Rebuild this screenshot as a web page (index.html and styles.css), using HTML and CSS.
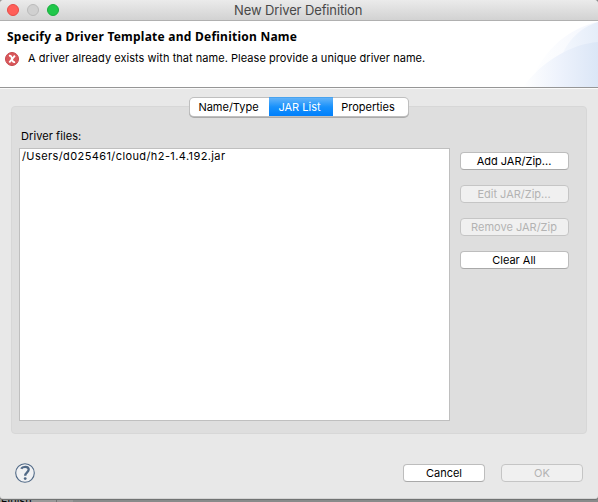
FILE: index.html
```html
<!DOCTYPE html>
<html lang="en">
<head>
<meta charset="utf-8">
<title>New Driver Definition</title>
<link rel="stylesheet" href="styles.css">
</head>
<body>
<div class="backdrop"><span class="behind">Finish</span></div>
<main class="window">
  <header class="titlebar">
    <div class="lights"><i class="light close"></i><i class="light minimize"></i><i class="light maximize"></i></div>
    <h1 class="title"><span>New Driver Definition</span></h1>
  </header>
  <section class="banner">
    <svg class="swoosh" width="120" height="66" viewBox="0 0 120 66">
      <defs>
        <linearGradient id="a"><stop offset="0" stop-color="#fff"/><stop offset="1" stop-color="#f3f6fd"/></linearGradient>
        <linearGradient id="b"><stop offset="0" stop-color="#f5f8fe"/><stop offset="1" stop-color="#e5edf9"/></linearGradient>
        <linearGradient id="c"><stop offset="0" stop-color="#fff"/><stop offset=".5" stop-color="#edf2fc"/><stop offset="1" stop-color="#dbe6f6"/></linearGradient>
      </defs>
      <path d="M52 66C60 34 89 7 120 1V66Z" fill="url(#a)"/>
      <path d="M80 45C87 21 101 7 120 1V45Z" fill="url(#b)"/>
      <path d="M45 66C65 39 94 23 120 21V66Z" fill="url(#c)"/>
    </svg>
    <h2 class="heading"><span>Specify a Driver Template and Definition Name</span></h2>
    <div class="message">
      <svg class="error" width="14" height="14" viewBox="0 0 14 14">
        <circle cx="7" cy="7" r="6.5" fill="#d9575b" stroke="#c5484c"/>
        <path d="M4 3.800C6 3.300 6.400 4.500 7 7S8.200 10.600 10 9.900M9.900 3.600L4.300 10.500" fill="none" stroke="#fff" stroke-width="1.9"/>
      </svg>
      <p><span>A driver already exists with that name. Please provide a unique driver name.</span></p>
    </div>
  </section>
  <section class="content">
    <nav class="tabs">
      <div class="tab name"><span>Name/Type</span></div><div class="tab selected"><span>JAR List</span></div><div class="tab props"><span>Properties</span></div>
    </nav>
    <div class="group">
      <div class="label"><span>Driver files:</span></div>
      <div class="columns">
        <div class="list"><span>/Users/d025461/cloud/h2-1.4.192.jar</span></div>
        <div class="actions">
          <button><span>Add JAR/Zip...</span></button>
          <button disabled><span>Edit JAR/Zip...</span></button>
          <button disabled><span>Remove JAR/Zip</span></button>
          <button><span>Clear All</span></button>
        </div>
      </div>
    </div>
  </section>
  <footer class="footer">
    <svg class="help" width="20" height="20" viewBox="0 0 20 20">
      <circle cx="10" cy="10" r="9.300" fill="#f0f1f3" stroke="#506986" stroke-width="1.100"/>
      <path d="M6.200 5.800C7.500 3.300 13.700 2.900 13.700 6.600C13.700 9.300 10.200 9.400 10.200 12.800" fill="none" stroke="#506986" stroke-width="2.300"/>
      <circle cx="10.200" cy="15.600" r="1.400" fill="#506986"/>
    </svg>
    <div class="confirm">
      <button><span>Cancel</span></button>
      <button disabled><span>OK</span></button>
    </div>
  </footer>
</main>
</body>
</html>
```
FILE: styles.css
```css
* { box-sizing: border-box; }
body { margin: 0; width: 598px; height: 502px; overflow: hidden; position: relative; background: #898b8b; font: 11px/14px Inter, sans-serif; color: #000; }
h1, h2, p { margin: 0; font: inherit; }
span { white-space: nowrap; }
.backdrop { position: absolute; inset: 0; background: linear-gradient(90deg, #999 56px, #747676 56px 57px, #999 57px 73px, #898b8b 73px); overflow: hidden; }
.behind { position: absolute; left: 1px; top: 494px; }
.window { position: relative; height: 499px; display: flex; flex-direction: column; background: #e8e8e8; border-radius: 4px 4px 3px 3px; overflow: hidden; border-bottom: 1px solid #d4d4d4; box-shadow: 0 1px 0 #707272; }
.titlebar { height: 21px; flex: none; position: relative; background: linear-gradient(#ebebeb, #d2d2d2); border-bottom: 1px solid #b0b0b0; }
.lights { position: absolute; left: 7px; top: 4px; display: flex; gap: 8px; }
.light { width: 12px; height: 12px; border-radius: 50%; border: 1px solid; }
.close { background: #ff5f59; border-color: #e64b46; }
.minimize { background: #d0d0d0; border-color: #bababa; }
.maximize { background: #20c74a; border-color: #18ad3d; }
.title { padding: 3px 0 0 234px; font-size: 13px; line-height: 15px; letter-spacing: -.12px; color: #484848; }
.banner { position: relative; height: 67px; flex: none; background: #fff; border-bottom: 1px solid #969696; padding: 8px 0 0 7px; }
.swoosh { position: absolute; right: 0; top: 0; }
.heading { font: bold 12px/16px "Noto Sans", sans-serif; letter-spacing: .24px; }
.message { display: flex; margin: 6px 0 0 -2px; gap: 9px; letter-spacing: .04px; }
.error { margin-top: 1px; }
.content { height: 348px; flex: none; border-top: 1px solid #fafafa; padding: 9px 11px 0; }
.tabs { position: relative; z-index: 1; display: flex; width: 218px; height: 18px; margin-left: 179px; background: #fff; border-radius: 4px; box-shadow: 0 0 0 1px #bfbfbf, 0 1px 0 1px #aaa; }
.tab { text-align: center; line-height: 18px; }
.name { width: 79px; padding-right: 2px; }
.selected { width: 64px; padding-right: 3px; background: linear-gradient(#63b3f8, #1791fc 50%, #007ffb); color: #fff; box-shadow: 0 -1px #49a3ef; }
.props { width: 75px; padding-right: 5px; }
.group { height: 328px; margin-top: -10px; padding: 22px 8px 0 7px; background: #dedede; border: 1px solid #d7d7d7; border-radius: 4px; }
.label { height: 19px; padding-left: 2px; letter-spacing: .08px; }
.columns { display: flex; gap: 10px; }
.list { width: 431px; height: 273px; flex: none; background: #fff; border: 1px solid #bfbfbf; padding: 0 0 0 2px; letter-spacing: .4px; }
.actions { display: flex; flex-direction: column; gap: 15px; padding-top: 4px; }
button { display: flex; justify-content: center; align-items: center; width: 109px; height: 18px; padding: 0 1px 0 0; border: 1px solid #bdbdbd; border-bottom-color: #a9a9a9; border-radius: 4px; background: #fff; color: #000; font: inherit; }
button:disabled { background: #f0f0f0; color: #b3b3b3; border-color: #c5c5c5; }
.footer { display: flex; justify-content: space-between; padding: 27px 15px 0; }
.confirm { display: flex; gap: 16px; padding-top: 1px; }
.confirm button { width: 82px; padding: 0; }
```
